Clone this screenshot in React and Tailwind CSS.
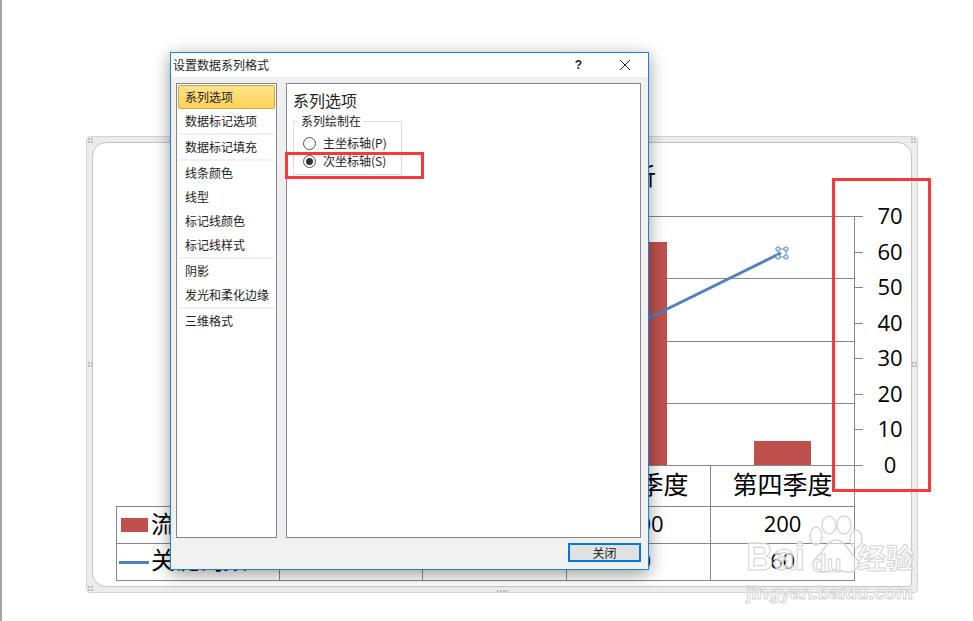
const sans = { fontFamily: '"Noto Sans CJK SC", "Liberation Sans", sans-serif' };
const numFont = '"Open Sans", "Noto Sans", sans-serif';

const groups = [
  ["系列选项", "数据标记选项"],
  ["数据标记填充"],
  ["线条颜色", "线型", "标记线颜色", "标记线样式"],
  ["阴影", "发光和柔化边缘"],
  ["三维格式"],
];

function SideList() {
  return (
    <div className="w-[101px] h-full border border-[#82868e] bg-white pt-px px-px box-border">
      {groups.map((g, i) => (
        <div key={i}>
          {i > 0 && <div className="h-[2px] bg-[#f0f0f6]" />}
          {g.map((t) => {
            const sel = t === "系列选项";
            return (
              <div
                key={t}
                className={
                  "h-6 flex items-center text-xs text-[#222] whitespace-nowrap rounded-[2px] box-border " +
                  (sel ? "pl-[6px] bg-gradient-to-b from-[#ffe48c] to-[#ffd257] border border-[#d2a94a]" : "pl-[7px]")
                }
              >
                {t}
              </div>
            );
          })}
        </div>
      ))}
    </div>
  );
}

function Radio({ on, label }) {
  return (
    <div className="h-[18px] flex items-center gap-[7px]">
      <span className="w-[13px] h-[13px] rounded-full border border-[#555] bg-white flex items-center justify-center box-border">
        {on && <span className="w-[7px] h-[7px] rounded-full bg-[#333]" />}
      </span>
      <span className="text-xs text-[#222] leading-none">{label}</span>
    </div>
  );
}

function Dialog() {
  return (
    <div
      className="absolute left-[170px] top-[52px] w-[479px] h-[518px] border border-[#1883d7] bg-[#f0f0f0] shadow-[0_4px_16px_rgba(0,0,0,0.4)] box-border flex flex-col"
      style={sans}
    >
      <div className="h-[24px] bg-white flex items-center pl-[2px] text-xs text-[#222] shrink-0">
        <span className="flex-1">设置数据系列格式</span>
        <span className="text-xs font-bold text-[#222] mr-[37px]" style={{ fontFamily: '"Liberation Sans", sans-serif' }}>?</span>
        <svg width="12" height="12" viewBox="0 0 12 12" className="mr-[17px]">
          <path d="M1 1 L11 11 M11 1 L1 11" stroke="#222" strokeWidth="1" fill="none" />
        </svg>
      </div>
      <div className="flex-1 flex flex-col pt-[6px] pl-[5px] pr-[7px]">
        <div className="flex gap-[9px] h-[455px] shrink-0">
          <SideList />
          <div className="flex-1 border border-[#82868e] bg-white pt-[6px] pl-[6px] box-border">
            <div className="text-base leading-5 text-[#222]">系列选项</div>
            <div className="relative mt-[11px] w-[109px] h-[54px] border border-[#dcdcdc] pt-3 pl-[9px] box-border">
              <span className="absolute left-[5px] top-[-8px] bg-white px-[2px] text-xs leading-[14px] text-[#222] whitespace-nowrap">系列绘制在</span>
              <Radio label="主坐标轴(P)" />
              <Radio on label="次坐标轴(S)" />
            </div>
          </div>
        </div>
        <div className="flex justify-end mt-[5px]">
          <button className="w-[73px] h-[19px] border-2 border-[#0078d7] bg-[#e1e1e1] text-xs leading-none text-[#222] box-border">关闭</button>
        </div>
      </div>
    </div>
  );
}

function Plot() {
  const grid = [73, 135, 198, 260, 322];
  const ticks = [[73, 70], [109, 60], [144, 50], [180, 40], [215, 30], [251, 20], [286, 10], [322, 0]];
  return (
    <svg width="819" height="322" viewBox="0 0 819 322" className="block overflow-visible shrink-0">
      <text x="563" y="42" textAnchor="end" fontSize="24" fill="#000" style={sans}>流量分析</text>
      {grid.map((y) => (
        <line key={y} x1="186" x2="762" y1={y + 0.5} y2={y + 0.5} stroke="#868686" strokeWidth="1" />
      ))}
      <rect x="500" y="99" width="74" height="223" fill="#c0504d" />
      <rect x="661" y="298" width="57" height="24" fill="#c0504d" />
      <line x1="507" y1="199" x2="688" y2="110" stroke="#4f81bd" strokeWidth="3" />
      <line x1="761.5" x2="761.5" y1="73" y2="322" stroke="#868686" />
      {ticks.map(([y, v]) => (
        <g key={v}>
          <line x1="762" x2="770" y1={y + 0.5} y2={y + 0.5} stroke="#868686" />
          <text x="797" y={y + 8} textAnchor="middle" fontSize="22" fill="#000" style={{ fontFamily: numFont }}>{v}</text>
        </g>
      ))}
      <g stroke="#5f8fb5" strokeWidth="1" fill="#d5e4ef">
        <rect x="685" y="106" width="8" height="8" fill="none" />
        <circle cx="685" cy="106" r="2.2" />
        <circle cx="693" cy="106" r="2.2" />
        <circle cx="685" cy="114" r="2.2" />
        <circle cx="693" cy="114" r="2.2" />
      </g>
    </svg>
  );
}

function Cell({ children, className = "" }) {
  return (
    <div className={"border-l border-t border-[#868686] flex items-center justify-center pb-1 text-black whitespace-nowrap overflow-hidden " + className}>
      {children}
    </div>
  );
}

function Num({ children }) {
  return <span className="text-[22px] leading-none" style={{ fontFamily: numFont }}>{children}</span>;
}

function DataTable() {
  return (
    <div
      className="ml-[23px] w-[739px] grid grid-cols-[163px_143px_144px_144px_145px] grid-rows-[41px_37px_38px] text-[25px]"
      style={sans}
    >
      <div />
      <Cell>第一季度</Cell>
      <Cell>第二季度</Cell>
      <Cell>第三季度</Cell>
      <Cell className="border-r">第四季度</Cell>
      <Cell className="!justify-start pl-1 gap-[3px]">
        <span className="w-[27px] h-[14px] bg-[#c0504d] shrink-0 translate-y-[2px]" />
        <span className="text-2xl">流量</span>
      </Cell>
      <Cell><Num>800</Num></Cell>
      <Cell><Num>1200</Num></Cell>
      <Cell><Num>1800</Num></Cell>
      <Cell className="border-r"><Num>200</Num></Cell>
      <Cell className="!justify-start pl-[2px] gap-[2px] border-b !pb-[6px]">
        <span className="w-[30px] h-[3px] bg-[#4f81bd] shrink-0 translate-y-[3px]" />
        <span className="text-2xl">关键词数</span>
      </Cell>
      <Cell className="border-b"><Num>10</Num></Cell>
      <Cell className="border-b"><Num>20</Num></Cell>
      <Cell className="border-b"><Num>40</Num></Cell>
      <Cell className="border-r border-b"><Num>60</Num></Cell>
    </div>
  );
}

function Dots({ className }) {
  return (
    <div className={"absolute grid grid-cols-2 gap-px " + className}>
      {[0, 1, 2, 3].map((i) => <span key={i} className="w-[2px] h-[2px] bg-[#bdbdbd]" />)}
    </div>
  );
}

function ChartFrame() {
  return (
    <div className="relative ml-[84px] mt-[136px] w-[832px] h-[457px] bg-[#ececec] border border-[#d4d4d4] rounded-[4px] p-[5px] box-border">
      <div className="w-full h-full bg-white border border-[#c4c4c4] rounded-tl-[14px] rounded-tr-[14px] rounded-bl-[14px] rounded-br-[4px] box-border flex flex-col">
        <Plot />
        <DataTable />
      </div>
      <Dots className="left-[1px] top-[1px]" />
      <Dots className="right-[1px] top-[1px]" />
      <Dots className="left-[1px] top-[225px]" />
      <Dots className="right-[0px] top-[225px]" />
      <Dots className="left-[1px] bottom-[1px]" />
      <div className="absolute left-[410px] bottom-[0px] flex gap-px">
        {[0, 1, 2, 3].map((i) => <span key={i} className="w-[2px] h-[2px] bg-[#bdbdbd]" />)}
      </div>
    </div>
  );
}

function Watermark() {
  const outline = "text-white/70 [-webkit-text-stroke:1px_#d4d4d4] font-bold leading-none whitespace-nowrap absolute";
  return (
    <div className="absolute left-[740px] top-[510px] w-[190px] h-[100px] pointer-events-none">
      <svg width="60" height="62" viewBox="0 0 60 62" className="absolute left-[66px] top-[4px]">
        <g fill="rgba(255,255,255,0.55)" stroke="#d8d8d8" strokeWidth="1.5">
          <ellipse cx="10" cy="22" rx="6" ry="9" />
          <ellipse cx="23" cy="11" rx="7" ry="9" />
          <ellipse cx="38" cy="11" rx="7" ry="9" />
          <ellipse cx="50" cy="25" rx="6" ry="9" />
          <path d="M30 26 C20 26 18 38 10 44 C4 50 10 60 20 58 C26 56 34 56 40 58 C50 60 56 50 50 44 C42 38 40 26 30 26 Z" />
        </g>
      </svg>
      <span className={outline + " left-[6px] top-[28px] text-[38px]"} style={{ fontFamily: '"Liberation Sans", sans-serif' }}>Bai</span>
      <span className={outline + " left-[72px] top-[42px] text-[24px]"} style={{ fontFamily: '"Liberation Sans", sans-serif' }}>du</span>
      <span className={outline + " left-[118px] top-[33px] text-[28px]"} style={sans}>经验</span>
      <span className={outline + " left-[6px] top-[73px] text-[19px]"} style={{ fontFamily: '"Liberation Sans", sans-serif' }}>jingyan.baidu.com</span>
    </div>
  );
}

export default function App() {
  return (
    <div className="relative w-[973px] h-[621px] bg-white overflow-hidden border-l-2 border-[#a2a6aa] box-border">
      <ChartFrame />
      <div className="absolute -left-[2px] top-0 w-[973px] h-[621px]">
        <Watermark />
        <Dialog />
        <div className="absolute left-[285px] top-[152px] w-[139px] h-[27px] border-[3px] border-[#f33b3b] box-border" />
        <div className="absolute left-[832px] top-[178px] w-[99px] h-[314px] border-[3px] border-[#f33b3b] box-border" />
      </div>
    </div>
  );
}
